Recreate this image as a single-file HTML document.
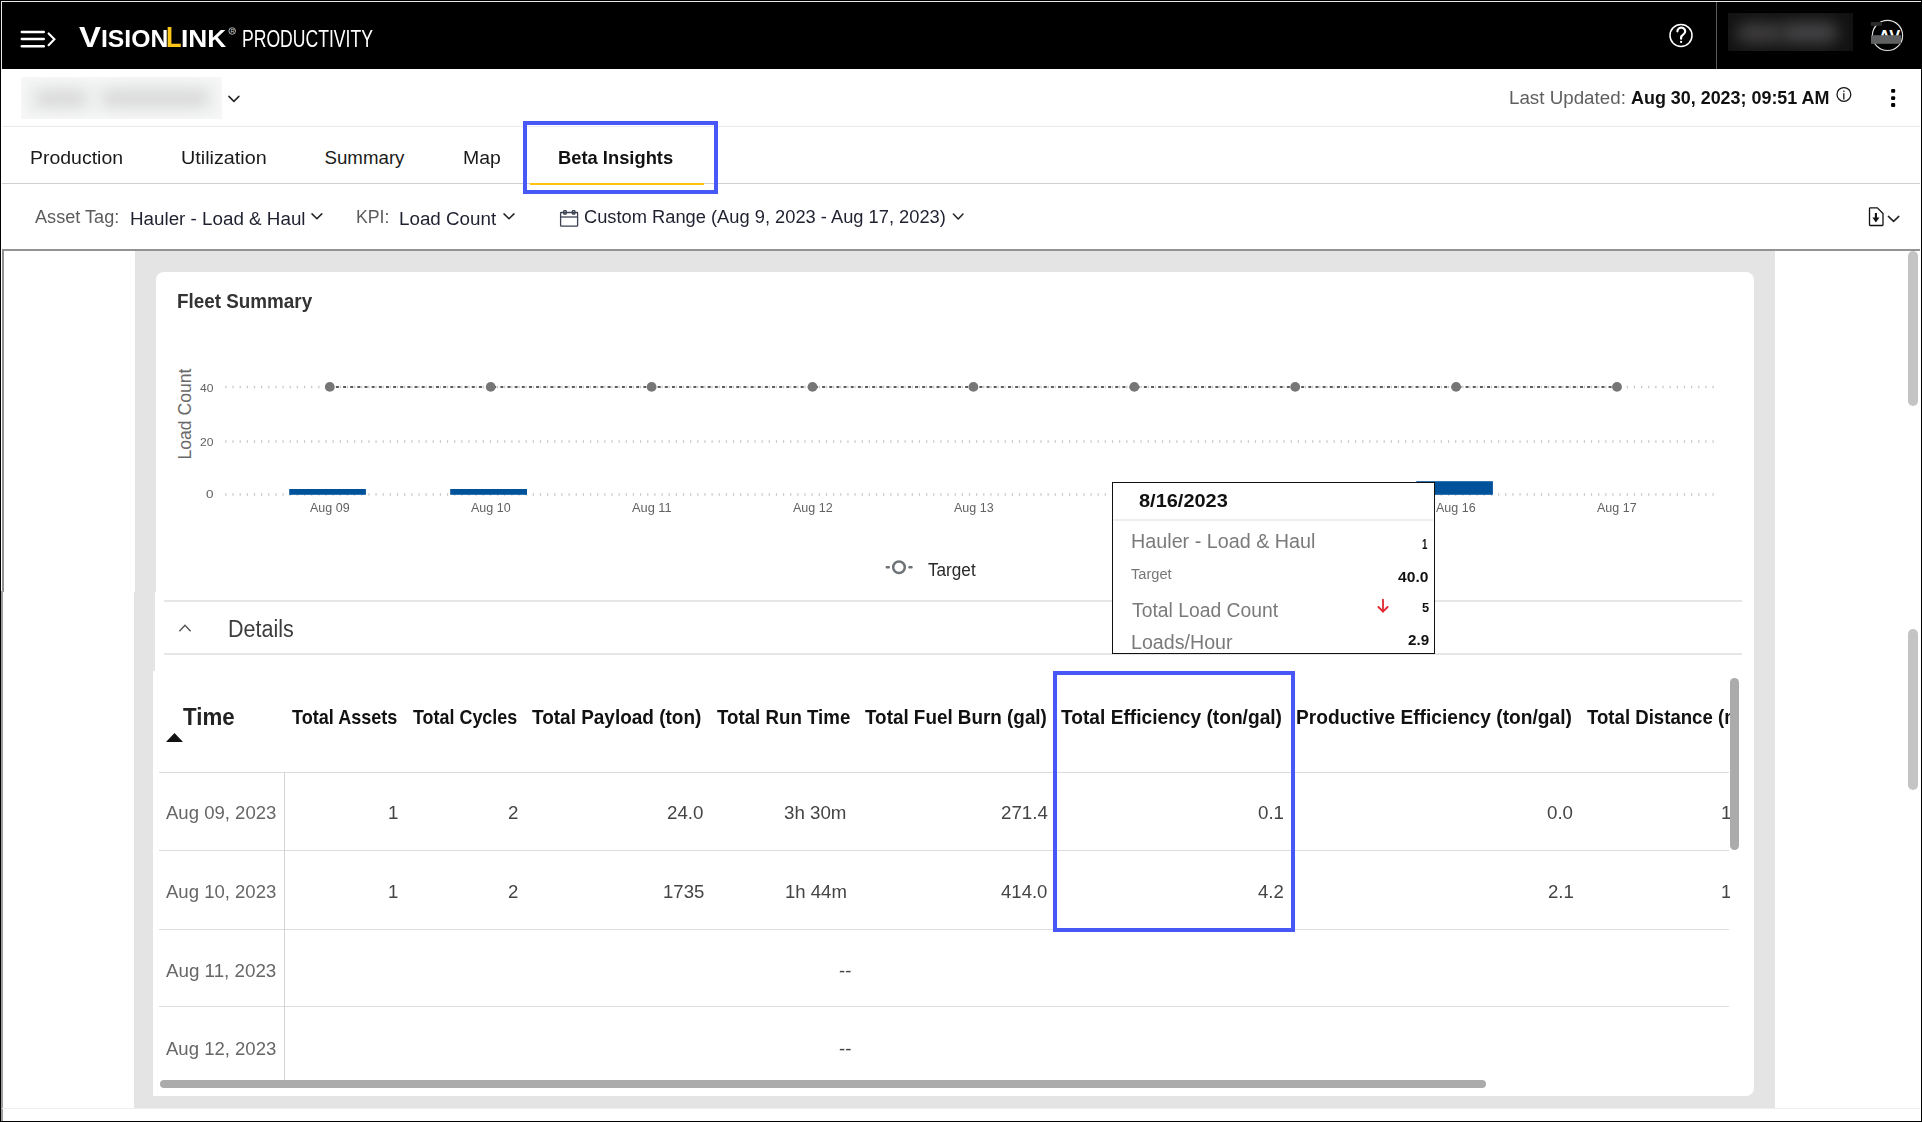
<!DOCTYPE html>
<html><head><meta charset="utf-8"><title>VisionLink Productivity - Beta Insights</title>
<style>
html,body{margin:0;padding:0;width:1922px;height:1122px;overflow:hidden;background:#fff;font-family:"Liberation Sans",sans-serif}
.abs{position:absolute}
.t{position:absolute;white-space:nowrap;transform-origin:0 0;font-family:"Liberation Sans",sans-serif}
svg{position:absolute;left:0;top:0;overflow:visible}
</style></head><body>
<!-- outer frame -->
<div class="abs" style="left:0;top:0;width:1922px;height:1122px;background:#fff"></div>
<!-- header bar -->
<div class="abs" style="left:0;top:0;width:1922px;height:69px;background:#000"></div>
<div class="abs" style="left:1px;top:1px;width:1920px;height:1px;background:#e8e8e8"></div>
<div class="abs" style="left:1px;top:1px;width:1px;height:68px;background:#e8e8e8"></div>
<div class="abs" style="left:1716px;top:2px;width:1px;height:67px;background:#5a5a5a"></div>
<!-- blurred user name -->
<div class="abs" style="left:1728px;top:13px;width:125px;height:38px;background:#121212;overflow:hidden">
  <div class="abs" style="left:8px;top:10px;width:48px;height:20px;background:#424040;border-radius:10px;filter:blur(8px)"></div>
  <div class="abs" style="left:52px;top:9px;width:58px;height:21px;background:#464648;border-radius:10px;filter:blur(8px)"></div>
</div>
<!-- row2 -->
<div class="abs" style="left:21px;top:77px;width:201px;height:42px;background:#f8f8f8;overflow:hidden">
  <div class="abs" style="left:3px;top:3px;width:195px;height:36px;background:#f1f2f2;filter:blur(5px)"></div>
  <div class="abs" style="left:14px;top:13px;width:52px;height:17px;background:#d9d9d9;border-radius:8px;filter:blur(7px)"></div>
  <div class="abs" style="left:80px;top:12px;width:108px;height:18px;background:#dadada;border-radius:9px;filter:blur(7px)"></div>
</div>
<div class="abs" style="left:2px;top:126px;width:1918px;height:1px;background:#ebebeb"></div>
<!-- tabs -->
<div class="abs" style="left:2px;top:183px;width:1918px;height:1px;background:#cfcfcf"></div>
<div class="abs" style="left:530px;top:183px;width:174px;height:2px;background:#ffc20e"></div>
<div class="abs" style="left:523px;top:121px;width:187px;height:65px;border:4px solid #4758f6"></div>
<!-- filter bar bottom border -->
<div class="abs" style="left:2px;top:249px;width:1918px;height:2px;background:#939393"></div>
<div class="abs" style="left:2px;top:249px;width:2px;height:343px;background:#939393"></div>
<div class="abs" style="left:1px;top:591px;width:2px;height:530px;background:#9e9e9e"></div>
<!-- gray panel -->
<div class="abs" style="left:135px;top:251px;width:1640px;height:857px;background:#e4e4e4"></div>
<div class="abs" style="left:134px;top:592px;width:2px;height:516px;background:#e4e4e4"></div>
<div class="abs" style="left:2px;top:1108px;width:1918px;height:1px;background:#eeeeee"></div>
<!-- card -->
<div class="abs" style="left:156px;top:272px;width:1598px;height:824px;background:#fff;border-radius:8px 8px 8px 0"></div>
<div class="abs" style="left:155px;top:592px;width:2px;height:79px;background:#fff"></div>
<div class="abs" style="left:153px;top:671px;width:4px;height:425px;background:#fff"></div>
<!-- page scrollbar -->
<div class="abs" style="left:1908px;top:251px;width:10px;height:155px;background:#c4c4c4;border-radius:5px"></div>
<div class="abs" style="left:1908px;top:629px;width:10px;height:161px;background:#c4c4c4;border-radius:5px"></div>
<!-- outer black border -->
<div class="abs" style="left:0;top:1121px;width:1922px;height:1px;background:#000"></div>
<div class="abs" style="left:1921px;top:0;width:1px;height:1122px;background:#000"></div>
<div class="abs" style="left:0;top:0;width:1px;height:1122px;background:#000"></div>

<!-- details lines -->
<div class="abs" style="left:164px;top:600px;width:1578px;height:2px;background:#e6e6e6"></div>
<div class="abs" style="left:164px;top:653px;width:1578px;height:2px;background:#e6e6e6"></div>
<!-- table lines -->
<div class="abs" style="left:159px;top:772px;width:1570px;height:1px;background:#dcdcdc"></div>
<div class="abs" style="left:159px;top:850px;width:1570px;height:1px;background:#dcdcdc"></div>
<div class="abs" style="left:159px;top:929px;width:1570px;height:1px;background:#dcdcdc"></div>
<div class="abs" style="left:159px;top:1006px;width:1570px;height:1px;background:#dcdcdc"></div>
<div class="abs" style="left:284px;top:772px;width:1px;height:308px;background:#d4d4d4"></div>
<!-- table scrollbars -->
<div class="abs" style="left:1730px;top:678px;width:9px;height:172px;background:#ababab;border-radius:5px"></div>
<div class="abs" style="left:160px;top:1080px;width:1326px;height:8px;background:#ababab;border-radius:4px"></div>
<!-- efficiency highlight -->
<div class="abs" style="left:1053px;top:671px;width:234px;height:253px;border:4px solid #4758f6"></div>

<svg width="1922" height="1122" viewBox="0 0 1922 1122">
<line x1="225.3" y1="387" x2="1718" y2="387" stroke="#c6c6c6" stroke-width="2.6" stroke-dasharray="1.2 5.95"/>
<line x1="225.3" y1="441.5" x2="1718" y2="441.5" stroke="#c6c6c6" stroke-width="2.6" stroke-dasharray="1.2 5.95"/>
<line x1="225.3" y1="494.5" x2="1718" y2="494.5" stroke="#c6c6c6" stroke-width="2.6" stroke-dasharray="1.2 5.95"/>
<line x1="329.8" y1="387" x2="1617" y2="387" stroke="#5e5e5e" stroke-width="2" stroke-dasharray="3 4.15" stroke-dashoffset="1.05"/>
<circle cx="329.8" cy="386.9" r="4.9" fill="#767676"/>
<circle cx="490.7" cy="386.9" r="4.9" fill="#767676"/>
<circle cx="651.6" cy="386.9" r="4.9" fill="#767676"/>
<circle cx="812.5" cy="386.9" r="4.9" fill="#767676"/>
<circle cx="973.4" cy="386.9" r="4.9" fill="#767676"/>
<circle cx="1134.3" cy="386.9" r="4.9" fill="#767676"/>
<circle cx="1295.2" cy="386.9" r="4.9" fill="#767676"/>
<circle cx="1456.1" cy="386.9" r="4.9" fill="#767676"/>
<circle cx="1617" cy="386.9" r="4.9" fill="#767676"/>
<rect x="289.2" y="489" width="76.7" height="5.8" fill="#00539b"/>
<rect x="450.2" y="489" width="76.8" height="5.8" fill="#00539b"/>
<rect x="1416.3" y="481.2" width="76.6" height="13.6" fill="#00539b"/>
<text x="0" y="0" transform="translate(191.3 459.5) rotate(-90)" font-family="Liberation Sans" font-size="18.5" fill="#6a6a6a" textLength="91" lengthAdjust="spacingAndGlyphs">Load Count</text>
</svg>
<svg width="1922" height="1122" viewBox="0 0 1922 1122">
<g stroke="#fff" stroke-width="2.4" stroke-linecap="round" fill="none">
<line x1="21.8" y1="32" x2="43.8" y2="32"/><line x1="21.8" y1="39" x2="43.8" y2="39"/><line x1="21.8" y1="46.2" x2="43.8" y2="46.2"/>
<polyline points="48.6,33.4 54.4,39.3 48.6,45.2" stroke-width="2.1"/>
</g>
<circle cx="232.2" cy="31" r="3.3" stroke="#ddd" stroke-width="0.8" fill="none"/>
<text x="230.4" y="33.2" font-family="Liberation Sans" font-size="5.5" fill="#ddd">R</text>
<circle cx="1681" cy="35.4" r="11" stroke="#fff" stroke-width="1.5" fill="none"/>
<path d="M1677.4,31.3 a3.9,3.7 0 1 1 6.0,3.1 c-1.5,1 -2.3,1.7 -2.3,3.4 v0.9" stroke="#fff" stroke-width="2.2" fill="none" stroke-linecap="round"/>
<circle cx="1681.1" cy="41.9" r="1.15" fill="#fff"/>
<circle cx="1887.5" cy="35.4" r="15.1" stroke="#e0e0e0" stroke-width="1.2" fill="none"/>
<rect x="1871" y="22" width="11" height="3.8" fill="#2b2b2b"/>
<text x="1878.6" y="41.5" font-family="Liberation Sans" font-weight="bold" font-size="16.5" fill="#fff" textLength="21.5" lengthAdjust="spacingAndGlyphs">AV</text>
<rect x="1871" y="35.2" width="30" height="8.6" fill="#606162"/>
<g stroke="#222" stroke-width="1.5" fill="none" stroke-linecap="round" stroke-linejoin="round">
<polyline points="228.9,96.4 233.9,101.4 238.9,96.4"/>
<polyline points="312,213.9 316.9,218.8 321.8,213.9"/>
<polyline points="504,213.9 509,218.8 514,213.9"/>
<polyline points="953.4,214 958.2,219 963,214"/>
<polyline points="1888.4,216.4 1893.6,221.4 1898.8,216.4"/>
</g>
<circle cx="1843.9" cy="94.4" r="6.9" stroke="#111" stroke-width="1.25" fill="none"/>
<rect x="1843.2" y="90.6" width="1.3" height="1.3" fill="#111"/>
<rect x="1843.2" y="93.2" width="1.25" height="6.3" fill="#111"/>
<rect x="1891.1" y="89" width="4.1" height="3.8" rx="1" fill="#000"/>
<rect x="1891.1" y="96.2" width="4.1" height="3.8" rx="1.2" fill="#000"/>
<rect x="1891.1" y="103.1" width="4.1" height="3.8" rx="1" fill="#000"/>
<g stroke="#3b4052" stroke-width="1.3" fill="none">
<rect x="560.6" y="212.5" width="17" height="13.7" rx="0.6"/>
<line x1="560.6" y1="217" x2="577.6" y2="217"/>
<rect x="563.7" y="210.6" width="2.5" height="3.4" rx="0.6"/>
<rect x="572.4" y="210.6" width="2.5" height="3.4" rx="0.6"/>
</g>
<path d="M1870.3,207.9 h7.1 l5.6,5.6 v11.2 a0.8,0.8 0 0 1 -0.8,0.8 h-11.9 a0.8,0.8 0 0 1 -0.8,-0.8 v-16 a0.8,0.8 0 0 1 0.8,-0.8 z" stroke="#111" stroke-width="1.3" fill="none" stroke-linejoin="round"/>
<line x1="1875.9" y1="213" x2="1875.9" y2="218.5" stroke="#111" stroke-width="2.1"/>
<polygon points="1872.4,217.4 1879.4,217.4 1875.9,222.4" fill="#111"/>
<polyline points="179.4,631.2 185,625.3 190.6,631.2" stroke="#555" stroke-width="1.4" fill="none"/>
<polygon points="166,742 174.5,733 183,742" fill="#111"/>
<circle cx="899" cy="567.2" r="5.8" stroke="#6e7378" stroke-width="2.5" fill="none"/>
<rect x="885.6" y="566" width="4.4" height="2.6" rx="1" fill="#6e7378"/>
<rect x="908.3" y="566" width="4.4" height="2.6" rx="1" fill="#6e7378"/>
</svg>
<!-- tooltip -->
<div class="abs" style="left:1112px;top:482px;width:321px;height:170px;border:1.5px solid #111;background:#fff"></div>
<div class="abs" style="left:1113px;top:519px;width:320px;height:2px;background:#eeeeee"></div>
<svg width="1922" height="1122" viewBox="0 0 1922 1122">
<g stroke="#e0282d" stroke-width="1.8" fill="none" stroke-linecap="round" stroke-linejoin="round">
<line x1="1383" y1="599.6" x2="1383" y2="611.6"/>
<polyline points="1378.4,607 1383,611.6 1387.6,607"/>
</g></svg>
<span class="t" style="left:241.76px;top:25px;font-size:23.74px;line-height:28px;color:#fff;transform:scaleX(0.7409);">PRODUCTIVITY</span>
<span class="t" style="left:79.40px;top:20px;font-size:29.93px;line-height:34px;color:#fff;font-weight:bold;transform:scaleX(1.1000);">V</span>
<span class="t" style="left:101.25px;top:25px;font-size:23.6px;line-height:28px;color:#fff;font-weight:bold;transform:scaleX(1.0466);">ISION</span>
<span class="t" style="left:165.70px;top:20px;font-size:29.93px;line-height:34px;color:#ffc61a;font-weight:bold;transform:scaleX(0.8500);">L</span>
<span class="t" style="left:180.79px;top:25px;font-size:23.6px;line-height:28px;color:#fff;font-weight:bold;transform:scaleX(1.1113);">INK</span>
<span class="t" style="left:1508.98px;top:86px;font-size:18.42px;line-height:23px;color:#5f5f5f;transform:scaleX(1.0196);">Last Updated:</span>
<span class="t" style="left:1630.70px;top:86px;font-size:18.42px;line-height:23px;color:#111;font-weight:bold;transform:scaleX(0.9732);">Aug 30, 2023; 09:51 AM</span>
<span class="t" style="left:30.36px;top:146px;font-size:18.71px;line-height:23px;color:#1a1a1a;transform:scaleX(1.0415);">Production</span>
<span class="t" style="left:180.94px;top:146px;font-size:18.71px;line-height:23px;color:#1a1a1a;transform:scaleX(1.0576);">Utilization</span>
<span class="t" style="left:324.50px;top:146px;font-size:18.71px;line-height:23px;color:#1a1a1a;">Summary</span>
<span class="t" style="left:462.74px;top:146px;font-size:18.42px;line-height:23px;color:#1a1a1a;transform:scaleX(1.0559);">Map</span>
<span class="t" style="left:558.26px;top:147px;font-size:17.7px;line-height:22px;color:#111;font-weight:bold;transform:scaleX(1.0370);">Beta Insights</span>
<span class="t" style="left:34.70px;top:205px;font-size:18.56px;line-height:23px;color:#5c5c5c;transform:scaleX(0.9773);">Asset Tag:</span>
<span class="t" style="left:129.58px;top:207px;font-size:18.42px;line-height:23px;color:#1f2130;transform:scaleX(1.0212);">Hauler - Load &amp; Haul</span>
<span class="t" style="left:356.05px;top:205px;font-size:18.56px;line-height:23px;color:#5c5c5c;transform:scaleX(0.9546);">KPI:</span>
<span class="t" style="left:399.48px;top:207px;font-size:18.42px;line-height:23px;color:#1f2130;transform:scaleX(1.0206);">Load Count</span>
<span class="t" style="left:583.50px;top:206px;font-size:18.13px;line-height:23px;color:#1f2130;transform:scaleX(1.0096);">Custom Range (Aug 9, 2023 - Aug 17, 2023)</span>
<span class="t" style="left:177.00px;top:288px;font-size:21.01px;line-height:26px;color:#333;font-weight:bold;transform:scaleX(0.8974);">Fleet Summary</span>
<span class="t" style="left:199.50px;top:380px;font-size:11.22px;line-height:16px;color:#626262;transform:scaleX(1.0785);">40</span>
<span class="t" style="left:199.50px;top:434px;font-size:11.22px;line-height:16px;color:#626262;transform:scaleX(1.0785);">20</span>
<span class="t" style="left:205.50px;top:486px;font-size:11.22px;line-height:16px;color:#626262;transform:scaleX(1.2000);">0</span>
<span class="t" style="left:309.90px;top:500px;font-size:12.37px;line-height:17px;color:#626262;transform:scaleX(1.0128);">Aug 09</span>
<span class="t" style="left:470.80px;top:500px;font-size:12.37px;line-height:17px;color:#626262;transform:scaleX(1.0128);">Aug 10</span>
<span class="t" style="left:631.70px;top:500px;font-size:12.37px;line-height:17px;color:#626262;transform:scaleX(1.0370);">Aug 11</span>
<span class="t" style="left:792.60px;top:500px;font-size:12.37px;line-height:17px;color:#626262;transform:scaleX(1.0128);">Aug 12</span>
<span class="t" style="left:953.50px;top:500px;font-size:12.37px;line-height:17px;color:#626262;transform:scaleX(1.0128);">Aug 13</span>
<span class="t" style="left:1436.20px;top:500px;font-size:12.37px;line-height:17px;color:#626262;transform:scaleX(1.0128);">Aug 16</span>
<span class="t" style="left:1597.10px;top:500px;font-size:12.37px;line-height:17px;color:#626262;transform:scaleX(1.0128);">Aug 17</span>
<span class="t" style="left:928.00px;top:558px;font-size:18.71px;line-height:23px;color:#2a2a2a;transform:scaleX(0.9176);">Target</span>
<span class="t" style="left:227.78px;top:615px;font-size:23.45px;line-height:28px;color:#3c3c3c;transform:scaleX(0.9182);">Details</span>
<span class="t" style="left:1139.00px;top:490px;font-size:17.99px;line-height:22px;color:#111;font-weight:bold;transform:scaleX(1.1099);">8/16/2023</span>
<span class="t" style="left:1131.20px;top:529px;font-size:19.71px;line-height:24px;color:#7a7a7a;transform:scaleX(1.0034);">Hauler - Load &amp; Haul</span>
<span class="t" style="left:1422.40px;top:535px;font-size:13.96px;line-height:18px;color:#111;font-weight:bold;transform:scaleX(0.7000);">1</span>
<span class="t" style="left:1130.60px;top:564px;font-size:15.54px;line-height:20px;color:#777;transform:scaleX(0.9396);">Target</span>
<span class="t" style="left:1397.50px;top:568px;font-size:14.24px;line-height:19px;color:#111;font-weight:bold;transform:scaleX(1.0976);">40.0</span>
<span class="t" style="left:1131.70px;top:597px;font-size:20.58px;line-height:25px;color:#7a7a7a;transform:scaleX(0.9386);">Total Load Count</span>
<span class="t" style="left:1421.50px;top:599px;font-size:13.67px;line-height:18px;color:#111;font-weight:bold;transform:scaleX(0.9375);">5</span>
<span class="t" style="left:1130.75px;top:629px;font-size:20.72px;line-height:25px;color:#7a7a7a;transform:scaleX(0.9481);">Loads/Hour</span>
<span class="t" style="left:1408.00px;top:631px;font-size:14.53px;line-height:19px;color:#111;font-weight:bold;transform:scaleX(1.0445);">2.9</span>
<span class="t" style="left:183.30px;top:703px;font-size:23.88px;line-height:28px;color:#222;font-weight:bold;transform:scaleX(0.9325);">Time</span>
<span class="t" style="left:292.20px;top:705px;font-size:19.86px;line-height:24px;color:#111;font-weight:bold;transform:scaleX(0.9093);">Total Assets</span>
<span class="t" style="left:412.70px;top:705px;font-size:19.86px;line-height:24px;color:#111;font-weight:bold;transform:scaleX(0.9024);">Total Cycles</span>
<span class="t" style="left:532.00px;top:705px;font-size:19.86px;line-height:24px;color:#111;font-weight:bold;transform:scaleX(0.9550);">Total Payload (ton)</span>
<span class="t" style="left:716.60px;top:705px;font-size:19.86px;line-height:24px;color:#111;font-weight:bold;transform:scaleX(0.9417);">Total Run Time</span>
<span class="t" style="left:865.40px;top:705px;font-size:19.86px;line-height:24px;color:#111;font-weight:bold;transform:scaleX(0.9493);">Total Fuel Burn (gal)</span>
<span class="t" style="left:1061.00px;top:705px;font-size:19.86px;line-height:24px;color:#111;font-weight:bold;transform:scaleX(0.9645);">Total Efficiency (ton/gal)</span>
<span class="t" style="left:1296.43px;top:705px;font-size:19.86px;line-height:24px;color:#111;font-weight:bold;transform:scaleX(0.9652);">Productive Efficiency (ton/gal)</span>
<div style="position:absolute;left:0;top:0;width:1730px;height:1122px;overflow:hidden"><span class="t" style="left:1587.00px;top:705px;font-size:19.86px;line-height:24px;color:#111;font-weight:bold;transform:scaleX(0.9370);">Total Distance (mi)</span></div>
<span class="t" style="left:165.80px;top:801px;font-size:18.85px;line-height:23px;color:#666;transform:scaleX(0.9845);">Aug 09, 2023</span>
<span class="t" style="left:165.80px;top:880px;font-size:18.71px;line-height:23px;color:#666;transform:scaleX(0.9919);">Aug 10, 2023</span>
<span class="t" style="left:165.80px;top:959px;font-size:18.71px;line-height:23px;color:#666;transform:scaleX(1.0045);">Aug 11, 2023</span>
<span class="t" style="left:165.80px;top:1037px;font-size:18.71px;line-height:23px;color:#666;transform:scaleX(0.9919);">Aug 12, 2023</span>
<span class="t" style="left:387.57px;top:801px;font-size:18.85px;line-height:23px;color:#444;transform:scaleX(0.9932);">1</span>
<span class="t" style="left:507.57px;top:801px;font-size:18.85px;line-height:23px;color:#444;transform:scaleX(0.9932);">2</span>
<span class="t" style="left:667.45px;top:801px;font-size:18.85px;line-height:23px;color:#444;transform:scaleX(0.9932);">24.0</span>
<span class="t" style="left:784.27px;top:801px;font-size:18.85px;line-height:23px;color:#444;transform:scaleX(0.9932);">3h 30m</span>
<span class="t" style="left:1000.54px;top:801px;font-size:18.85px;line-height:23px;color:#444;transform:scaleX(0.9932);">271.4</span>
<span class="t" style="left:1257.86px;top:801px;font-size:18.85px;line-height:23px;color:#444;transform:scaleX(0.9932);">0.1</span>
<span class="t" style="left:1547.46px;top:801px;font-size:18.85px;line-height:23px;color:#444;transform:scaleX(0.9932);">0.0</span>
<div style="position:absolute;left:0;top:0;width:1730px;height:1122px;overflow:hidden"><span class="t" style="left:1720.61px;top:801px;font-size:18.85px;line-height:23px;color:#444;transform:scaleX(0.9932);">1</span></div>
<span class="t" style="left:387.57px;top:880px;font-size:18.71px;line-height:23px;color:#444;transform:scaleX(0.9932);">1</span>
<span class="t" style="left:507.57px;top:880px;font-size:18.71px;line-height:23px;color:#444;transform:scaleX(0.9932);">2</span>
<span class="t" style="left:662.50px;top:880px;font-size:18.71px;line-height:23px;color:#444;transform:scaleX(0.9932);">1735</span>
<span class="t" style="left:784.65px;top:880px;font-size:18.71px;line-height:23px;color:#444;transform:scaleX(0.9932);">1h 44m</span>
<span class="t" style="left:1000.84px;top:880px;font-size:18.71px;line-height:23px;color:#444;transform:scaleX(0.9932);">414.0</span>
<span class="t" style="left:1257.99px;top:880px;font-size:18.71px;line-height:23px;color:#444;transform:scaleX(0.9932);">4.2</span>
<span class="t" style="left:1547.59px;top:880px;font-size:18.71px;line-height:23px;color:#444;transform:scaleX(0.9932);">2.1</span>
<div style="position:absolute;left:0;top:0;width:1730px;height:1122px;overflow:hidden"><span class="t" style="left:1720.61px;top:880px;font-size:18.71px;line-height:23px;color:#444;transform:scaleX(0.9932);">1</span></div>
<span class="t" style="left:838.86px;top:959px;font-size:18.71px;line-height:23px;color:#444;transform:scaleX(0.9932);">--</span>
<span class="t" style="left:838.86px;top:1037px;font-size:18.71px;line-height:23px;color:#444;transform:scaleX(0.9932);">--</span>
</body></html>
